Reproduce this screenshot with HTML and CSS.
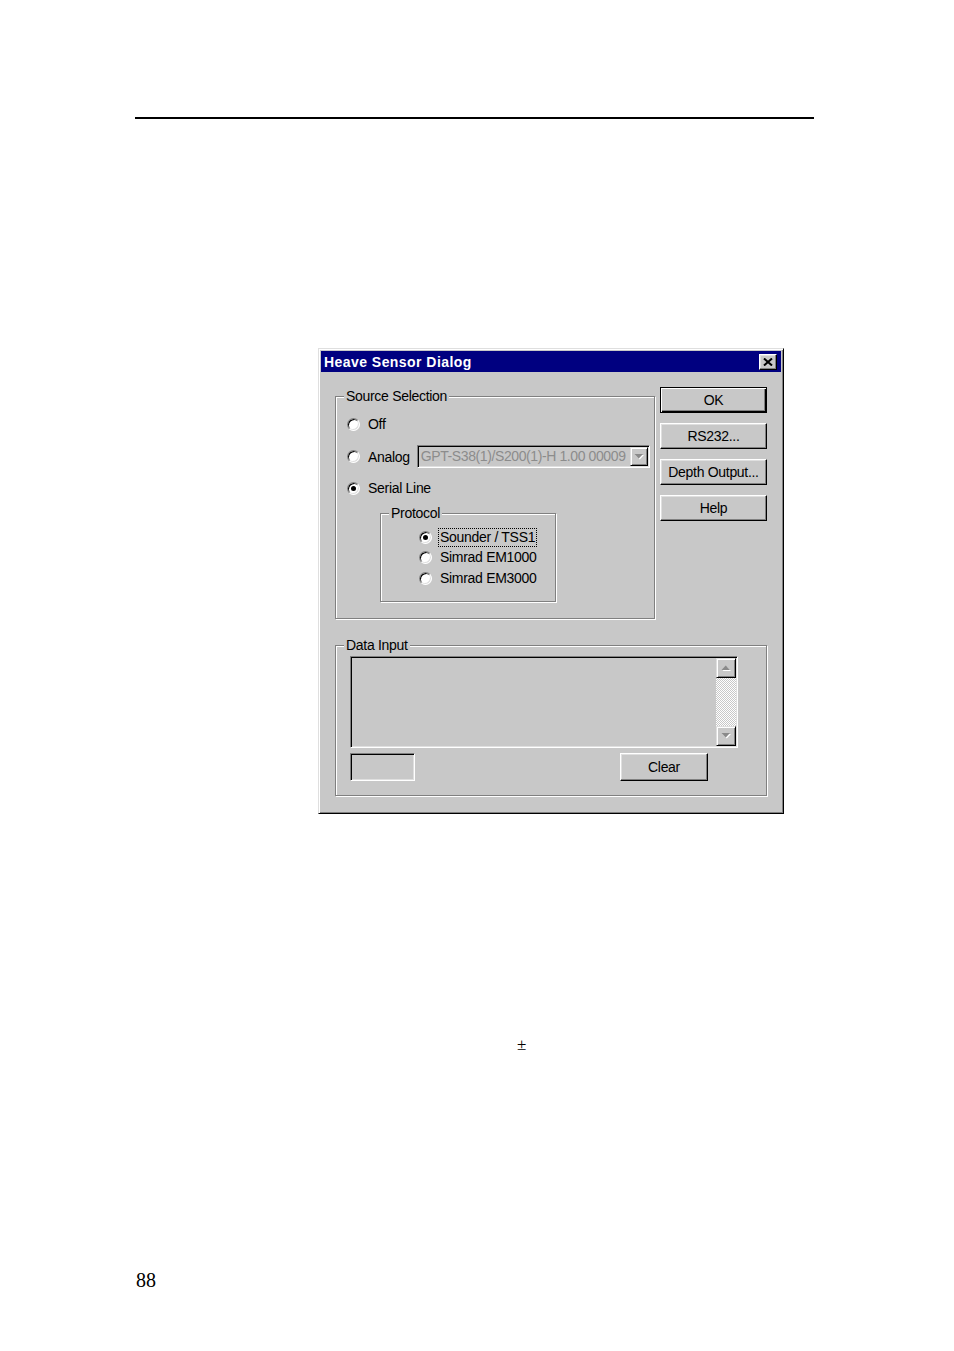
FILE: index.html
```html
<!DOCTYPE html>
<html>
<head>
<meta charset="utf-8">
<title>Heave Sensor Dialog</title>
<link rel="stylesheet" href="styles.css">
</head>
<body>
<div class="page">
  <hr class="rule">
  <div class="dialog">
    <div class="titlebar">
      <span class="title">Heave Sensor Dialog</span>
      <span class="closebtn"><svg width="10" height="8" viewBox="0 0 10 8"><path d="M1 0.5 L9 7.5 M9 0.5 L1 7.5" stroke="#000" stroke-width="2" fill="none"/></svg></span>
    </div>
    <div class="dbody">
      <div class="toprow">
        <fieldset class="group src">
          <legend>Source Selection</legend>
          <div class="opt off"><span class="radio"></span><span>Off</span></div>
          <div class="opt analog">
            <span class="radio"></span><span>Analog</span>
            <div class="combo">
              <span class="combo-text">GPT-S38(1)/S200(1)-H 1.00 00009</span>
              <span class="dropbtn"><svg width="10" height="6" viewBox="0 0 10 6"><path d="M1.5 1 H10 L5.75 5.5 Z" fill="#fff"/><path d="M0.5 0 H9 L4.75 4.5 Z" fill="#8a8a8a"/></svg></span>
            </div>
          </div>
          <div class="opt serial"><span class="radio on"></span><span>Serial Line</span></div>
          <fieldset class="group proto">
            <legend>Protocol</legend>
            <div class="popt first"><span class="radio on"></span><span class="lbl focus">Sounder / TSS1</span></div>
            <div class="popt"><span class="radio"></span><span class="lbl">Simrad EM1000</span></div>
            <div class="popt"><span class="radio"></span><span class="lbl">Simrad EM3000</span></div>
          </fieldset>
        </fieldset>
        <div class="btncol">
          <button class="btn default">OK</button>
          <button class="btn">RS232...</button>
          <button class="btn">Depth Output...</button>
          <button class="btn">Help</button>
        </div>
      </div>
      <fieldset class="group data">
        <legend>Data Input</legend>
        <div class="textarea">
          <div class="scrollbar">
            <span class="sbtn"><svg width="10" height="6" viewBox="0 0 10 6"><path d="M1.5 6 H10 L5.75 1.5 Z" fill="#fff"/><path d="M0.5 5 H9 L4.75 0.5 Z" fill="#8a8a8a"/></svg></span>
            <span class="track"></span>
            <span class="sbtn"><svg width="10" height="6" viewBox="0 0 10 6"><path d="M1.5 1 H10 L5.75 5.5 Z" fill="#fff"/><path d="M0.5 0 H9 L4.75 4.5 Z" fill="#8a8a8a"/></svg></span>
          </div>
        </div>
        <div class="drow">
          <div class="smallbox"></div>
          <button class="btn clear">Clear</button>
        </div>
      </fieldset>
    </div>
  </div>
  <p class="pm">±</p>
  <div class="folio">88</div>
</div>
</body>
</html>
```
FILE: styles.css
```css
html, body {
  margin: 0;
  padding: 0;
  background: #fff;
}

.page {
  width: 954px;
  min-height: 1351px;
  overflow: hidden;
  font-family: "Liberation Serif", "Times New Roman", serif;
  color: #000;
}

.rule {
  display: block;
  margin: 117px 0 0 135px;
  width: 679px;
  height: 2px;
  border: 0;
  background: #000;
}

.dialog {
  margin: 229px 0 0 318px;
  width: 466px;
  height: 466px;
  box-sizing: border-box;
  border: 1px solid;
  border-color: #dfdfdf #000 #000 #dfdfdf;
  box-shadow: inset 1px 1px #fff, inset -1px -1px #808080;
  padding: 2px;
  background: #c8c8c8;
  font-family: "Liberation Sans", Arial, sans-serif;
  font-size: 14px;
  line-height: 16px;
  letter-spacing: -0.3px;
  color: #000;
}

.titlebar {
  height: 21px;
  display: flex;
  align-items: center;
  justify-content: space-between;
  background: #000080;
  color: #fff;
  padding: 0 4px 0 3px;
  font-weight: bold;
  letter-spacing: 0.45px;
}

.closebtn {
  width: 18px;
  height: 16px;
  box-sizing: border-box;
  background: #c8c8c8;
  border: 1px solid;
  border-color: #fff #000 #000 #fff;
  box-shadow: inset -1px -1px #808080, inset 1px 1px #dfdfdf;
  display: flex;
  align-items: center;
  justify-content: center;
}

.closebtn svg {
  display: block;
}

.dbody {
  padding: 15px 14px 0;
}

.toprow {
  display: flex;
  gap: 5px;
  align-items: flex-start;
}

.group {
  margin: 0;
  padding: 0;
  border: 1px solid #808080;
  box-shadow: inset 1px 1px #fff, 1px 1px #fff;
  min-width: 0;
  min-inline-size: 0;
  box-sizing: border-box;
}

.group > legend {
  margin-left: 8px;
  padding: 0 2px;
  line-height: 16px;
  background: #c8c8c8;
}

.src {
  width: 320px;
  height: 231px;
  margin-top: 1px;
  padding-top: 9px;
}

.opt {
  display: flex;
  align-items: center;
  margin-left: 11px;
}

.off {
  height: 22px;
}

.analog {
  height: 23px;
  margin-top: 10px;
}

.serial {
  height: 22px;
  margin-top: 9px;
}

.radio {
  position: relative;
  flex: none;
  width: 13px;
  height: 13px;
  box-sizing: border-box;
  border-radius: 50%;
  border: 1px solid;
  border-color: #808080 #fff #fff #808080;
  background: #fff;
  box-shadow: inset 1px 1px #000, inset -1px -1px #dfdfdf;
  margin-right: 8px;
}

.radio.on::after {
  content: "";
  position: absolute;
  left: 3px;
  top: 3px;
  width: 5px;
  height: 5px;
  border-radius: 50%;
  background: #000;
}

.combo {
  margin-left: 7px;
  width: 233px;
  height: 23px;
  box-sizing: border-box;
  border: 1px solid;
  border-color: #808080 #fff #fff #808080;
  box-shadow: inset 1px 1px #000, inset -1px -1px #dfdfdf;
  padding: 1px;
  display: flex;
  align-items: stretch;
  background: #c8c8c8;
}

.combo-text {
  flex: 1;
  min-width: 0;
  overflow: hidden;
  white-space: nowrap;
  padding-left: 2px;
  color: #8c8c8c;
  line-height: 19px;
  letter-spacing: -0.4px;
}

.dropbtn {
  flex: none;
  width: 18px;
  box-sizing: border-box;
  border: 1px solid;
  border-color: #dfdfdf #000 #000 #dfdfdf;
  box-shadow: inset 1px 1px #fff, inset -1px -1px #808080;
  display: flex;
  align-items: center;
  justify-content: center;
}

.dropbtn svg,
.sbtn svg {
  display: block;
}

.proto {
  margin: 6px 0 0 44px;
  width: 176px;
  height: 97px;
  padding-top: 6px;
}

.popt {
  display: flex;
  align-items: center;
  height: 21px;
  margin-left: 38px;
}

.popt.first {
  height: 20px;
}

.popt .radio {
  margin-right: 6px;
}

.lbl {
  border: 1px solid transparent;
  padding: 0 1px;
  line-height: 17px;
}

.lbl.focus {
  border: 1px dotted #000;
}

.btncol {
  display: flex;
  flex-direction: column;
  gap: 10px;
  width: 107px;
}

.btn {
  display: block;
  height: 26px;
  margin: 0;
  padding: 0;
  box-sizing: border-box;
  background: #c8c8c8;
  border: 1px solid;
  border-color: #fff #000 #000 #fff;
  box-shadow: inset -1px -1px #808080, inset 1px 1px #dfdfdf;
  font-family: inherit;
  font-size: 14px;
  line-height: 16px;
  letter-spacing: -0.3px;
  color: #000;
  text-align: center;
}

.btn.default {
  border-color: #000;
  box-shadow: inset 1px 1px #fff, inset -1px -1px #000, inset -2px -2px #808080;
}

.data {
  margin-top: 18px;
  width: 432px;
  height: 159px;
  padding-top: 3px;
}

.textarea {
  margin-left: 14px;
  width: 388px;
  height: 92px;
  box-sizing: border-box;
  border: 1px solid;
  border-color: #808080 #fff #fff #808080;
  box-shadow: inset 1px 1px #000, inset -1px -1px #dfdfdf;
  padding: 1px;
  display: flex;
  justify-content: flex-end;
}

.scrollbar {
  width: 20px;
  display: flex;
  flex-direction: column;
}

.sbtn {
  flex: none;
  height: 20px;
  box-sizing: border-box;
  background: #c8c8c8;
  border: 1px solid;
  border-color: #dfdfdf #000 #000 #dfdfdf;
  box-shadow: inset 1px 1px #fff, inset -1px -1px #808080;
  display: flex;
  align-items: center;
  justify-content: center;
}

.track {
  flex: 1;
  background: repeating-conic-gradient(#ffffff 0 25%, #c8c8c8 0 50%) 0 0 / 2px 2px;
}

.drow {
  display: flex;
  margin: 5px 0 0 14px;
  width: 358px;
}

.smallbox {
  width: 65px;
  height: 28px;
  box-sizing: border-box;
  border: 1px solid;
  border-color: #808080 #fff #fff #808080;
  box-shadow: inset 1px 1px #000, inset -1px -1px #dfdfdf;
}

.btn.clear {
  width: 88px;
  height: 28px;
  margin-left: auto;
}

.pm {
  margin: 221px 0 0 517px;
  font-size: 17px;
  line-height: 20px;
}

.folio {
  margin: 213px 0 0 136px;
  font-size: 20px;
  line-height: 24px;
}
```
